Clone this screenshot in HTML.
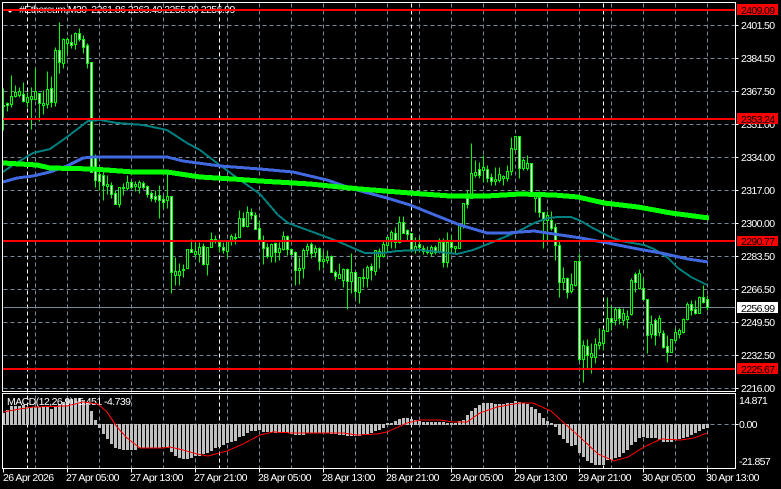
<!DOCTYPE html>
<html><head><meta charset="utf-8"><style>
html,body{margin:0;padding:0;background:#000;width:781px;height:489px;overflow:hidden}
svg{display:block}
text{font-family:"Liberation Sans",sans-serif;font-size:10.5px;fill:#fff}
.p{letter-spacing:-.65px}
.t{letter-spacing:-.55px}
.d{letter-spacing:-.65px;fill:#000}
</style></head><body>
<svg width="781" height="489" viewBox="0 0 781 489" xmlns="http://www.w3.org/2000/svg">
<rect width="781" height="489" fill="#000"/>
<!-- grid -->
<g transform="translate(.5 .5)" fill="none" shape-rendering="crispEdges">
<path stroke="#778899" stroke-dasharray="4 3" d="M3 25H735M3 58H735M3 91H735M3 124H735M3 157H735M3 190H735M3 223H735M3 256H735M3 289H735M3 322H735M3 355H735M3 388H735M3 424H735"/>
<path stroke="#778899" stroke-dasharray="4 3" d="M35 3V468M67 3V468M99 3V468M131 3V468M163 3V468M195 3V468M227 3V468M259 3V468M291 3V468M323 3V468M355 3V468M387 3V468M419 3V468M451 3V468M483 3V468M515 3V468M547 3V468M579 3V468M611 3V468M643 3V468M675 3V468M707 3V468"/>
<path stroke="#fff" stroke-dasharray="4 3" d="M27 3V468M219 3V468M411 3V468M603 3V468"/>
<path stroke="#778899" d="M3 307H735"/>
</g>
<!-- title -->
<path d="M6 9h8l-4 4z" fill="#fff"/>
<text x="19" y="13" class="t" xml:space="preserve">#Ethereum,M30  2261.86 2263.40 2255.80 2256.99</text>
<!-- MACD bars -->
<path fill="none" stroke="#c0c0c0" stroke-width="3" shape-rendering="crispEdges" transform="translate(.5 0)" d="M3 413V425M7 410V425M11 406V425M15 406V425M19 406V425M23 405V425M27 407V425M31 407V425M35 407V425M39 407V425M43 407V425M47 407V425M51 409V425M55 406V425M59 404V425M63 402V425M67 399V425M71 399V425M75 398V425M79 398V425M83 400V425M87 402V425M91 411V425M95 420V425M99 424V428M103 424V434M107 424V439M111 424V444M115 424V448M119 424V449M123 424V450M127 424V450M131 424V450M135 424V450M139 424V448M143 424V448M147 424V448M151 424V448M155 424V448M159 424V448M163 424V447M167 424V448M171 424V452M175 424V456M179 424V458M183 424V459M187 424V459M191 424V458M195 424V456M199 424V456M203 424V454M207 424V453M211 424V451M215 424V448M219 424V447M223 424V445M227 424V443M231 424V442M235 424V441M239 424V437M243 424V436M247 424V433M251 424V431M255 424V431M259 424V430M263 424V432M267 424V432M271 424V432M275 424V433M279 424V433M283 424V432M287 424V433M291 424V434M295 424V435M299 424V435M303 424V435M307 424V433M311 424V433M315 424V433M319 424V433M323 424V433M327 424V433M331 424V434M335 424V434M339 424V435M343 424V435M347 424V436M351 424V436M355 424V436M359 424V436M363 424V435M367 424V435M371 424V433M375 424V431M379 424V430M383 424V428M387 423V425M391 423V425M395 421V425M399 419V425M403 418V425M407 418V425M411 419V425M415 420V425M419 421V425M423 422V425M427 422V425M431 422V425M435 422V425M439 422V425M443 422V425M447 423V425M451 423V425M455 423V425M459 421V425M463 420V425M467 415V425M471 411V425M475 408V425M479 405V425M483 403V425M487 403V425M491 403V425M495 404V425M499 404V425M503 404V425M507 403V425M511 403V425M515 401V425M519 402V425M523 403V425M527 404V425M531 407V425M535 409V425M539 413V425M543 418V425M547 421V425M551 423V425M555 424V427M559 424V435M563 424V439M567 424V443M571 424V446M575 424V445M579 424V453M583 424V457M587 424V461M591 424V463M595 424V465M599 424V465M603 424V465M607 424V460M611 424V460M615 424V458M619 424V457M623 424V453M627 424V450M631 424V445M635 424V442M639 424V438M643 424V437M647 424V438M651 424V438M655 424V438M659 424V440M663 424V442M667 424V442M671 424V442M675 424V440M679 424V439M683 424V438M687 424V437M691 424V435M695 424V433M699 424V431M703 424V429M707 424V428"/>
<text x="7" y="405" class="t" fill="#fff">MACD(12,26,9) -5.451 -4.739</text>
<polyline fill="none" stroke="#f00" shape-rendering="crispEdges" points="3,412 20,409 33,407 67,406 83,402 98,404 107,412 117,427 127,438 140,448 163,448 170,447 183,450 197,454 208,456 227,451 243,444 260,435 273,432 293,433 310,433 343,433 357,435 377,434 387,432 407,423 420,420 440,420 453,422 467,422 480,413 497,407 520,403 533,403 551,411 564,423 581,438 598,454 614,461 628,457 644,447 661,439 681,440 694,438 707,433"/>
<!-- candles -->
<g transform="translate(.5 .5)" shape-rendering="crispEdges">
<path fill="none" stroke="#0f0" d="M3 88V130M7 102V111M11 75V107M15 85V97M19 87V97M23 82V102M27 92V107M31 87V129M35 68V100M39 93V121M43 90V114M47 71V108M51 76V107M55 47V106M59 22V73M63 38V68M67 37V54M71 34V48M75 32V49M79 28V41M83 35V53M87 43V68M91 62V172M95 154V187M99 170V190M103 172V200M107 175V194M111 182V198M115 190V204M119 187V207M123 183V195M127 175V190M131 180V189M135 181V191M139 180V193M143 181V189M147 185V197M151 191V201M155 190V202M159 185V218M163 195V208M167 169V208M171 196V293M175 257V285M179 263V285M183 264V277M187 249V268M191 239V252M195 242V256M199 242V262M203 243V265M207 247V275M211 232V247M215 235V243M219 239V252M223 242V253M227 240V257M231 234V245M235 233V244M239 210V237M243 212V227M247 206V227M251 208V219M255 212V229M259 220V239M263 235V264M267 243V258M271 243V262M275 242V262M279 242V260M283 231V250M287 235V255M291 248V255M295 251V285M299 257V284M303 248V278M307 243V255M311 242V258M315 245V257M319 247V270M323 252V268M327 250V263M331 255V272M335 270V280M339 263V278M343 268V287M347 268V309M351 253V293M355 272V297M359 277V303M363 268V287M367 265V287M371 263V280M375 250V275M379 248V268M383 240V257M387 236V253M391 230V248M395 227V248M399 216V243M403 216V233M407 229V240M411 233V252M415 237V253M419 237V252M423 245V254M427 246V254M431 245V256M435 245V254M439 238V253M443 238V267M447 232V267M451 234V252M455 246V253M459 223V248M463 203V228M467 190V208M471 143V198M475 160V177M479 162V178M483 155V182M487 165V182M491 173V185M495 167V185M499 167V182M503 175V185M507 165V181M511 137V175M515 136V150M519 136V178M523 158V170M527 155V170M531 163V196M535 192V212M539 191V217M543 212V248M547 211V242M551 211V230M555 223V260M559 240V297M563 267V290M567 277V298M571 273V293M575 261V286M579 253V361M583 340V382M587 339V368M591 343V373M595 338V363M599 328V349M603 328V350M607 297V331M611 305V330M615 307V325M619 307V324M623 308V325M627 310V328M631 278V315M635 272V292M639 269V289M643 278V300M647 299V353M651 315V338M655 318V345M659 315V336M663 330V348M667 335V362M671 339V352M675 328V342M679 328V338M683 318V333M687 302V320M691 300V315M695 300V314M699 296V313M703 285V303M707 295V310"/>
<path fill="#fff" stroke="#0f0" d="M6 103h2v2h-2zM22 94h2v7h-2zM38 93h2v10h-2zM50 88h2v14h-2zM58 50h2v12h-2zM70 42h2v3h-2zM78 33h2v6h-2zM82 39h2v8h-2zM86 45h2v18h-2zM90 62h2v110h-2zM94 157h2v23h-2zM98 174h2v7h-2zM102 175h2v10h-2zM110 185h2v9h-2zM114 193h2v11h-2zM130 182h2v5h-2zM142 183h2v4h-2zM146 186h2v8h-2zM150 193h2v5h-2zM154 196h2v3h-2zM158 195h2v5h-2zM162 199h2v3h-2zM170 196h2v76h-2zM190 249h2v3h-2zM202 246h2v18h-2zM218 242h2v4h-2zM222 247h2v3h-2zM242 218h2v8h-2zM250 212h2v3h-2zM254 215h2v14h-2zM258 228h2v11h-2zM262 240h2v8h-2zM266 247h2v9h-2zM274 243h2v9h-2zM286 236h2v13h-2zM290 249h2v5h-2zM294 252h2v18h-2zM310 244h2v9h-2zM318 248h2v13h-2zM330 256h2v16h-2zM334 272h2v4h-2zM346 269h2v12h-2zM354 272h2v19h-2zM370 266h2v4h-2zM394 233h2v9h-2zM402 222h2v11h-2zM406 230h2v4h-2zM410 233h2v16h-2zM418 244h2v3h-2zM422 248h2v3h-2zM426 250h2v2h-2zM434 247h2v5h-2zM442 242h2v20h-2zM450 242h2v5h-2zM466 198h2v6h-2zM478 169h2v6h-2zM486 169h2v9h-2zM490 177h2v4h-2zM518 136h2v32h-2zM530 163h2v30h-2zM538 197h2v15h-2zM542 212h2v8h-2zM550 220h2v8h-2zM554 227h2v18h-2zM558 245h2v37h-2zM566 278h2v14h-2zM578 261h2v98h-2zM586 346h2v9h-2zM610 318h2v4h-2zM618 309h2v9h-2zM634 274h2v8h-2zM642 288h2v11h-2zM646 299h2v36h-2zM654 320h2v15h-2zM662 333h2v14h-2zM666 346h2v6h-2zM690 304h2v6h-2zM694 309h2v4h-2zM702 297h2v5h-2zM706 299h2v8h-2z"/>
<path fill="#000" stroke="#0f0" d="M2 105h2v1h-2zM10 96h2v8h-2zM14 92h2v4h-2zM18 91h2v4h-2zM26 97h2v5h-2zM30 96h2v3h-2zM34 91h2v8h-2zM42 103h2v2h-2zM46 89h2v15h-2zM54 50h2v52h-2zM62 39h2v24h-2zM66 39h2v4h-2zM74 33h2v11h-2zM106 184h2v2h-2zM118 187h2v17h-2zM122 187h2v1h-2zM126 182h2v6h-2zM134 184h2v2h-2zM138 182h2v5h-2zM166 196h2v4h-2zM174 271h2v4h-2zM178 271h2v4h-2zM182 269h2v1h-2zM186 249h2v19h-2zM194 251h2v3h-2zM198 247h2v7h-2zM206 247h2v17h-2zM210 239h2v8h-2zM214 239h2v1h-2zM226 241h2v10h-2zM230 236h2v4h-2zM234 237h2v1h-2zM238 218h2v19h-2zM246 212h2v14h-2zM270 244h2v12h-2zM278 248h2v4h-2zM282 236h2v13h-2zM298 268h2v2h-2zM302 250h2v18h-2zM306 246h2v4h-2zM314 248h2v4h-2zM322 259h2v2h-2zM326 257h2v3h-2zM338 274h2v4h-2zM342 269h2v11h-2zM350 272h2v9h-2zM358 277h2v15h-2zM362 277h2v1h-2zM366 267h2v11h-2zM374 250h2v21h-2zM378 251h2v5h-2zM382 244h2v12h-2zM386 237h2v8h-2zM390 232h2v7h-2zM398 222h2v20h-2zM414 246h2v3h-2zM430 247h2v6h-2zM438 242h2v9h-2zM446 242h2v20h-2zM454 246h2v2h-2zM458 225h2v23h-2zM462 203h2v22h-2zM470 173h2v25h-2zM474 172h2v3h-2zM482 167h2v3h-2zM494 179h2v2h-2zM498 174h2v6h-2zM502 176h2v2h-2zM506 171h2v7h-2zM510 148h2v23h-2zM514 136h2v13h-2zM522 160h2v8h-2zM526 163h2v5h-2zM534 195h2v3h-2zM546 215h2v5h-2zM562 278h2v4h-2zM570 284h2v7h-2zM574 261h2v24h-2zM582 345h2v14h-2zM590 353h2v4h-2zM594 344h2v13h-2zM598 342h2v3h-2zM602 330h2v13h-2zM606 318h2v13h-2zM614 309h2v11h-2zM622 313h2v7h-2zM626 316h2v3h-2zM630 280h2v34h-2zM638 273h2v15h-2zM650 324h2v10h-2zM658 318h2v14h-2zM670 339h2v13h-2zM674 332h2v8h-2zM678 330h2v4h-2zM682 319h2v13h-2zM686 304h2v15h-2zM698 297h2v16h-2z"/>
</g>
<!-- moving averages -->
<g fill="none" stroke-linejoin="round" shape-rendering="crispEdges">
<polyline stroke="#008080" stroke-width="2" points="3,172 13,165 33,153 50,149 67,137 88,121 100,120 117,123 143,125 167,130 187,143 200,150 217,163 240,180 260,194 278,215 288,223 310,231 337,241 360,251 365,253 383,253 397,251 420,250 440,252 457,254 473,250 493,242 521,230 534,223 548,218 558,217 571,217 581,221 591,227 608,236 621,241 644,245 654,249 668,258 678,268 691,277 707,285"/>
<polyline stroke="#4169e1" stroke-width="3" points="3,182 17,178 33,176 50,172 67,166 83,158 93,157 167,157 183,161 220,166 260,169 293,172 327,180 353,189 387,198 410,205 440,217 460,225 487,233 507,233 521,232 534,231 554,234 581,238 608,243 638,249 661,253 688,259 708,262"/>
<polyline stroke="#0f0" stroke-width="5" points="3,163 37,165 50,168 93,169 133,172 167,172 200,177 233,179 260,181 310,184 360,189 410,193 450,196 487,196 520,194 554,195 578,197 604,203 638,207 671,213 709,218"/>
</g>
<!-- red levels -->
<g fill="#f00" shape-rendering="crispEdges">
<rect x="3" y="9" width="732" height="2"/>
<rect x="3" y="118" width="732" height="2"/>
<rect x="3" y="240" width="732" height="2"/>
<rect x="3" y="368" width="732" height="2"/>
</g>
<!-- frame -->
<g fill="none" stroke="#fff" transform="translate(.5 .5)" shape-rendering="crispEdges">
<path d="M2 2H735V391H2ZM2 393H735V468H2Z"/>
<path d="M735 25h3M735 58h3M735 91h3M735 124h3M735 157h3M735 190h3M735 223h3M735 256h3M735 289h3M735 322h3M735 355h3M735 388h3M735 424h3M3 468v4M67 468v4M131 468v4M195 468v4M259 468v4M323 468v4M387 468v4M451 468v4M515 468v4M579 468v4M643 468v4M707 468v4"/>
</g>
<!-- price scale -->
<text class="p" x="741" y="29">2401.50</text>
<text class="p" x="741" y="62">2384.50</text>
<text class="p" x="741" y="95">2367.50</text>
<text class="p" x="741" y="128">2351.00</text>
<text class="p" x="741" y="161">2334.00</text>
<text class="p" x="741" y="194">2317.00</text>
<text class="p" x="741" y="227">2300.00</text>
<text class="p" x="741" y="260">2283.50</text>
<text class="p" x="741" y="293">2266.50</text>
<text class="p" x="741" y="326">2249.50</text>
<text class="p" x="741" y="359">2232.50</text>
<text class="p" x="741" y="392">2216.00</text>
<text class="p" x="739" y="404">14.871</text>
<text class="p" x="739" y="428">0.00</text>
<text class="p" x="739" y="465">-21.857</text>
<!-- price labels -->
<g shape-rendering="crispEdges">
<rect x="737" y="4" width="41" height="11" fill="#f00"/>
<rect x="737" y="113" width="41" height="11" fill="#f00"/>
<rect x="737" y="236" width="41" height="10" fill="#f00"/>
<rect x="737" y="363" width="41" height="11" fill="#f00"/>
<rect x="737" y="302" width="41" height="11" fill="#fff"/>
</g>
<text class="d" x="741" y="14">2409.09</text>
<text class="d" x="741" y="123">2353.24</text>
<text class="d" x="741" y="245">2290.77</text>
<text class="d" x="741" y="373">2225.67</text>
<text class="d" x="741" y="312">2256.99</text>
<!-- time scale -->
<text class="t" x="3" y="481">26 Apr 2026</text>
<text class="t" x="66" y="481">27 Apr 05:00</text>
<text class="t" x="130" y="481">27 Apr 13:00</text>
<text class="t" x="194" y="481">27 Apr 21:00</text>
<text class="t" x="258" y="481">28 Apr 05:00</text>
<text class="t" x="322" y="481">28 Apr 13:00</text>
<text class="t" x="386" y="481">28 Apr 21:00</text>
<text class="t" x="450" y="481">29 Apr 05:00</text>
<text class="t" x="514" y="481">29 Apr 13:00</text>
<text class="t" x="578" y="481">29 Apr 21:00</text>
<text class="t" x="642" y="481">30 Apr 05:00</text>
<text class="t" x="706" y="481">30 Apr 13:00</text>
</svg>
</body></html>
